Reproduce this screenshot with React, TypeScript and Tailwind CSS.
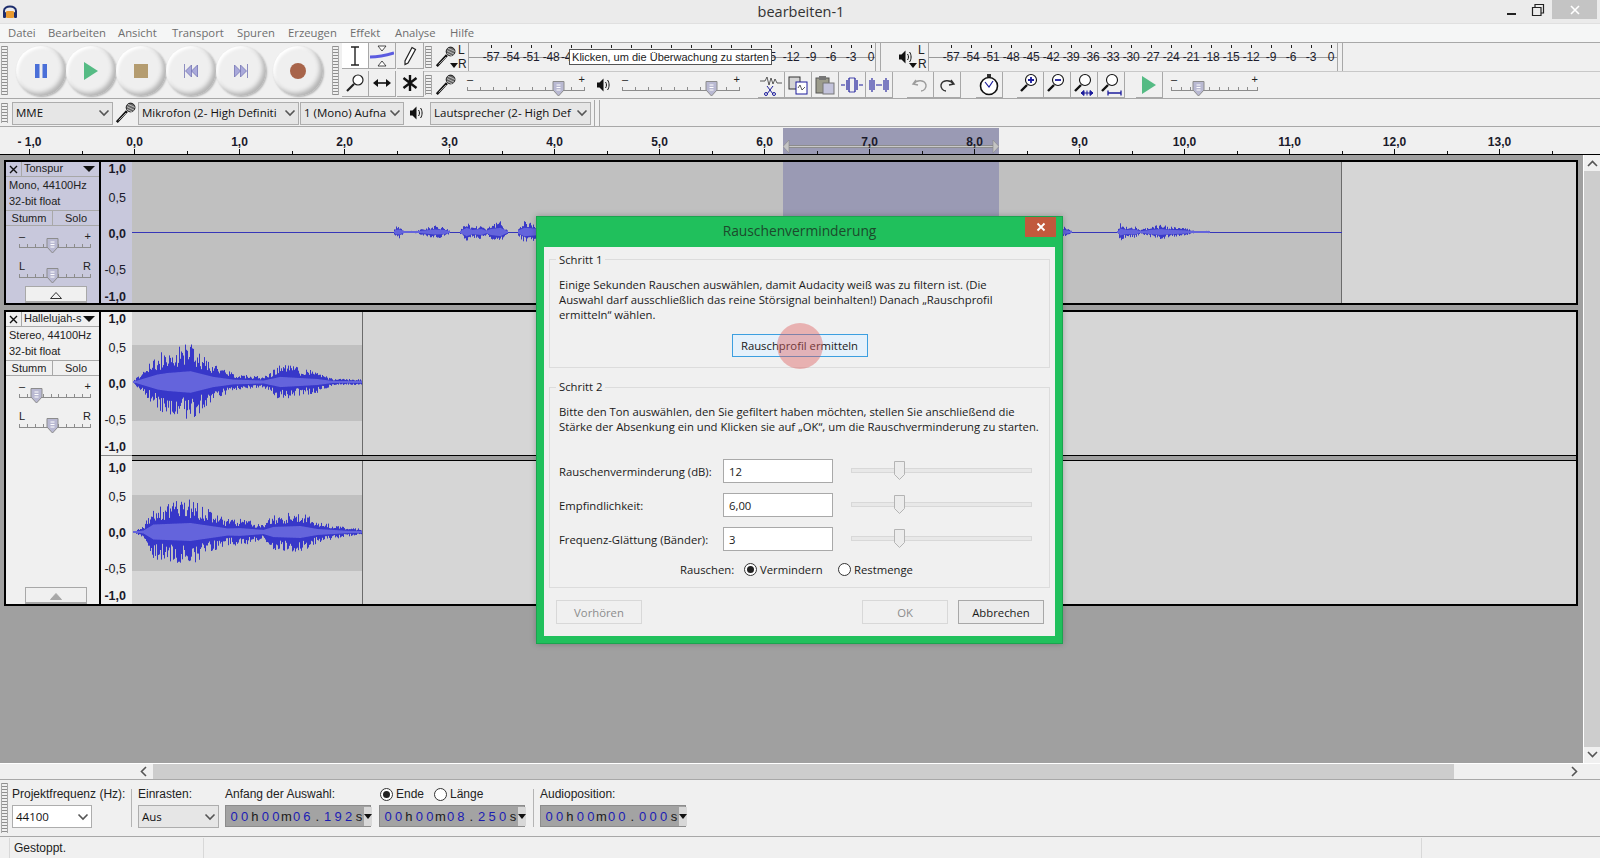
import React from 'react';

const sans = 'font-["Liberation_Sans",Arial,sans-serif]';
const ui = 'font-["Open_Sans","Noto_Sans",sans-serif]';

// deterministic noise so the wave form stays the same on every run
function makeRand(seed: number) {
  let s = seed;
  return () => {
    s = (s * 9301 + 49297) % 233280;
    return s / 233280;
  };
}

function envelope(knots: number[][], x: number) {
  for (let i = 0; i < knots.length - 1; i++) {
    const [x0, a0] = knots[i];
    const [x1, a1] = knots[i + 1];
    if (x >= x0 && x <= x1) return a0 + ((a1 - a0) * (x - x0)) / (x1 - x0);
  }
  return 0;
}

function wavePaths(knots: number[][], cy: number, seed: number, rmsRatio = 0.42) {
  const rand = makeRand(seed);
  let peak = '';
  let rms = '';
  const start = knots[0][0];
  const end = knots[knots.length - 1][0];
  for (let x = start; x < end; x += 1) {
    const a = envelope(knots, x);
    if (a <= 0) continue;
    const up = a * (0.45 + 0.65 * rand());
    const down = a * (0.45 + 0.65 * rand());
    peak += `M${x + 0.5} ${(cy - up).toFixed(1)}V${(cy + down).toFixed(1)}`;
    const r = Math.max(a * rmsRatio, 1);
    rms += `M${x + 0.5} ${(cy - r).toFixed(1)}V${(cy + r).toFixed(1)}`;
  }
  return { peak, rms };
}

const monoBlobs = [
  [[261, 0], [263, 5], [267, 6], [272, 1], [282, 1], [290, 3], [302, 6], [312, 5], [318, 1]],
  [[328, 2], [334, 10], [340, 5], [349, 7], [354, 3], [358, 7], [368, 10], [374, 3], [376, 1]],
  [[386, 4], [392, 10], [404, 8]],
  [[930, 6], [936, 3], [940, 1]],
  [[985, 1], [988, 8], [994, 5], [1002, 6], [1008, 2], [1018, 5], [1028, 7], [1038, 5], [1052, 4], [1062, 1], [1078, 1]],
];
const stereoLeft = [[0, 0], [8, 8], [25, 25], [35, 30], [58, 36], [81, 17], [101, 8], [131, 5], [148, 17], [185, 10], [201, 3], [230, 3]];
const stereoRight = [[0, 0], [11, 5], [21, 25], [58, 30], [95, 12], [108, 13], [131, 7], [141, 17], [168, 20], [185, 10], [215, 4], [230, 3]];

function MonoWave() {
  const parts = monoBlobs.map((k, i) => wavePaths(k, 70, 17 + i * 31));
  return (
    <svg width="1444" height="142" className="block bg-[#c0c0c0]">
      <rect x="651" y="0" width="216" height="142" fill="#9a9ab4" />
      <rect x="1210" y="0" width="234" height="142" fill="#d6d6d6" />
      <rect x="1209" y="0" width="1" height="142" fill="#6c6c6c" />
      <rect x="0" y="70" width="1210" height="1" fill="#3636b8" />
      {parts.map((p, i) => (
        <g key={i}>
          <path d={p.peak} stroke="#3a3ac8" strokeWidth="1" />
          <path d={p.rms} stroke="#6464dc" strokeWidth="1" />
        </g>
      ))}
    </svg>
  );
}

function StereoWave({ knots, seed, height, cy }: { knots: number[][]; seed: number; height: number; cy: number }) {
  const p = wavePaths(knots, cy, seed, 0.3);
  return (
    <svg width="1444" height={height} className="block bg-[#d6d6d6]">
      <rect x="0" y={cy - 37} width="230" height="76" fill="#c0c0c0" />
      <rect x="230" y="0" width="1" height={height} fill="#6c6c6c" />
      <path d={p.peak} stroke="#3737c9" strokeWidth="1" />
      <path d={p.rms} stroke="#6464dc" strokeWidth="1" />
    </svg>
  );
}

function Grip() {
  return (
    <div className="w-[9px] shrink-0 self-stretch py-[3px] px-[1px]">
      <div className="h-full border-x border-[#a8a8a8] bg-[repeating-linear-gradient(to_bottom,#8f8f8f_0,#8f8f8f_1px,#f0f0f0_1px,#f0f0f0_3px)]" />
    </div>
  );
}

function MicIcon({ size = 22 }: { size?: number }) {
  return (
    <svg width={size} height={size} viewBox="0 0 24 24">
      <path d="M13 10L2 22" stroke="#111" strokeWidth="2.8" />
      <path d="M12 12L4 20" stroke="#fff" strokeWidth="0.7" />
      <circle cx="17" cy="6" r="4.8" fill="#666" stroke="#111" strokeWidth="1" />
      <path d="M13 5L21 9M14 2.5L22 6M13 8L19 11" stroke="#ddd" strokeWidth="0.8" />
    </svg>
  );
}

function SpeakerIcon() {
  return (
    <svg width="14" height="16" viewBox="0 0 14 16">
      <path d="M0 5.5H2.5L6.5 1.5V14.5L2.5 10.5H0Z" fill="#111" />
      <path d="M8.5 5C9.8 6.5 9.8 9.5 8.5 11M10.5 3C12.6 5.5 12.6 10.5 10.5 13" fill="none" stroke="#111" strokeWidth="1" />
    </svg>
  );
}

function MeterDrop() {
  return (
    <svg width="8" height="5" viewBox="0 0 8 5" className="absolute bottom-[3px] right-0">
      <path d="M0 0H8L4 5Z" fill="#111" />
    </svg>
  );
}

function Magnifier({ mark }: { mark?: 'plus' | 'minus' | 'fit' | 'project' }) {
  return (
    <svg width="22" height="24" viewBox="0 0 22 24">
      <path d="M8 12L2 18" stroke="#111" strokeWidth="2.4" />
      <circle cx="12" cy="7" r="5.5" fill="#fff" stroke="#111" strokeWidth="1.1" />
      {mark === 'plus' && <path d="M9 7H15M12 4V10" stroke="#1c1c9c" strokeWidth="1.8" />}
      {mark === 'minus' && <path d="M9 7H15" stroke="#1c1c9c" strokeWidth="1.8" />}
      {mark === 'fit' && <path d="M8 20H20M11 17.5L8 20L11 22.5ZM17 17.5L20 20L17 22.5ZM14 17.5V22.5" fill="#1c1c9c" stroke="#1c1c9c" strokeWidth="1" />}
      {mark === 'project' && <path d="M8 20H21M8 17.5V22.5M21 17.5V22.5" stroke="#1c1c9c" strokeWidth="1.3" fill="none" />}
    </svg>
  );
}

function Thumb() {
  return (
    <svg width="13" height="17" viewBox="0 0 13 17" className="block">
      <path d="M1 1.5H12V10L6.5 16L1 10Z" fill="#b9b9d2" stroke="#8c8c8c" strokeWidth="1" />
      <path d="M4.5 5H8.5M4.5 7.5H8.5M4.5 10H8.5" stroke="#fff" strokeWidth="1" />
    </svg>
  );
}

function TickSlider({ width, thumbAt, left = '-', right = '+' }: { width: string; thumbAt: string; left?: string; right?: string }) {
  return (
    <div className={`relative h-[24px] shrink-0 ${width}`}>
      <div className={`flex justify-between pt-[1px] text-[11px] leading-[11px] text-[#222] ${sans}`}>
        <span>{left === '-' ? '–' : left}</span>
        <span>{right}</span>
      </div>
      <div className="mt-[1px] flex h-[5px] justify-between border-b border-[#8c8c8c] pt-[1px]">
        {Array.from({ length: 10 }).map((_, i) => (
          <span key={i} className="h-[3px] w-px bg-[#8c8c8c]" />
        ))}
      </div>
      <div className={`absolute top-[7px] ${thumbAt}`}>
        <Thumb />
      </div>
    </div>
  );
}

function TransportButton({ children, extra = '' }: { children: React.ReactNode; extra?: string }) {
  return (
    <div className={`flex h-[50px] w-[50px] shrink-0 items-center justify-center rounded-full bg-[#efefef] shadow-[inset_-3px_-3px_4px_#b4b4b4,inset_2px_2px_3px_#ffffff,1px_1px_2px_#b0b0b0] ${extra}`}>
      {children}
    </div>
  );
}

function ToolButton({ children, active, extra = '' }: { children: React.ReactNode; active?: boolean; extra?: string }) {
  return (
    <div className={`flex h-[26px] w-[27px] shrink-0 items-center justify-center border-r border-b border-[#a8a8a8] ${active ? 'bg-white' : 'bg-[#f0f0f0]'} ${extra}`}>
      {children}
    </div>
  );
}

const meterValues = ['-57', '-54', '-51', '-48', '-45', '-42', '-39', '-36', '-33', '-30', '-27', '-24', '-21', '-18', '-15', '-12', '-9', '-6', '-3', '0'];
// what stays readable of the first meter next to the tooltip
const firstMeterLabels: Record<string, string> = { '-42': '', '-39': '', '-36': '', '-33': '', '-30': '', '-27': '', '-24': '', '-21': '', '-18': '', '-45': '-4', '-15': '5' };

function Meter({ width, shown = {} }: { width: string; shown?: Record<string, string> }) {
  return (
    <div className={`relative flex h-full shrink-0 overflow-hidden border-l border-[#a8a8a8] pl-[12px] ${width}`}>
      <div className="absolute inset-x-0 top-[14px] h-px bg-[#9a9a9a]" />
      {meterValues.map(v => (
        <div key={v} className="relative flex w-[20px] shrink-0 flex-col items-center">
          <span className="mt-[2px] h-[3px] w-px bg-[#222]" />
          <span className={`mt-[2px] h-[14px] text-[12px] leading-[14px] tracking-[-0.2px] text-[#1c1c2c] ${v === '-45' && shown[v] ? 'self-start' : ''} ${v === '-15' && shown[v] ? 'self-end pr-[5px]' : ''} ${sans}`}>{v in shown ? shown[v] : v}</span>
        </div>
      ))}
    </div>
  );
}

function LR() {
  return (
    <div className={`flex w-[10px] shrink-0 flex-col text-[12px] leading-[14px] text-[#222] ${sans}`}>
      <span>L</span>
      <span>R</span>
    </div>
  );
}

function DeviceSelect({ label, width, white }: { label: string; width: string; white?: boolean }) {
  return (
    <div className={`flex h-[23px] shrink-0 items-center border border-[#adadad] pl-[3px] text-[11.5px] text-[#111] ${width} ${white ? 'bg-white' : 'bg-[#e6e6e6]'} ${ui}`}>
      <span className="min-w-0 flex-1 whitespace-nowrap">{label}</span>
      <svg width="16" height="10" viewBox="0 0 16 10" className="shrink-0">
        <path d="M3.5 2.5L8 7L12.5 2.5" fill="none" stroke="#555" strokeWidth="1.6" />
      </svg>
    </div>
  );
}

const rulerLabels = ['- 1,0', '0,0', '1,0', '2,0', '3,0', '4,0', '5,0', '6,0', '7,0', '8,0', '9,0', '10,0', '11,0', '12,0', '13,0'];

function TimeRuler() {
  return (
    <div className="relative h-[27px] shrink-0 overflow-hidden bg-[#f0f0f0]">
      <div className="absolute bottom-0 left-[783px] top-[1px] w-[216px] bg-[#9a9ab4]">
        <div className="absolute left-[6px] right-[6px] top-[17px] h-[3px] border-y border-[#8c8c8c] bg-[#c8c8c8]" />
        <svg width="216" height="14" className="absolute left-0 top-[12px]">
          <path d="M0 6.5L6 0V13Z M216 6.5L210 0V13Z" fill="#c4c4c4" stroke="#888" strokeWidth="0.6" />
        </svg>
      </div>
      <div className="relative ml-[-23px] flex pt-[8px]">
        {rulerLabels.map(l => (
          <div key={l} className={`w-[105px] shrink-0 text-center text-[12px] font-bold leading-[14px] text-[#1a1a2a] ${sans}`}>{l}</div>
        ))}
      </div>
      <div className="relative ml-[-23px] flex h-[5px] items-end pl-[52px]">
        {Array.from({ length: 32 }).map((_, i) => (
          <div key={i} className="flex w-[52.5px] shrink-0 items-end">
            <span className={`w-px bg-[#111] ${i % 2 === 0 ? 'h-[5px]' : 'h-[3px]'}`} />
          </div>
        ))}
      </div>
    </div>
  );
}

const vLabels = [
  { t: '1,0', c: 'mt-0 font-bold' },
  { t: '0,5', c: 'mt-[15px]' },
  { t: '0,0', c: 'mt-[22px] font-bold' },
  { t: '-0,5', c: 'mt-[22px]' },
  { t: '-1,0', c: 'mt-[13px] font-bold' },
];

function VerticalRuler({ bg }: { bg: string }) {
  return (
    <div className={`flex w-[31px] shrink-0 flex-col items-end pr-[6px] text-[12.5px] leading-[14px] text-[#1a1a2a] ${bg} ${sans}`}>
      {vLabels.map(v => (
        <span key={v.t} className={v.c}>{v.t}</span>
      ))}
    </div>
  );
}

function TrackPanel({ name, info, selected, gainThumb, children }: { name: string; info: string; selected?: boolean; gainThumb: string; children?: React.ReactNode }) {
  return (
    <div className={`flex w-[95px] shrink-0 flex-col border-r-2 border-black text-[11px] leading-[14px] text-[#222] ${selected ? 'bg-[#c8c8dc]' : 'bg-[#f0f0f0]'} ${sans}`}>
      <div className="flex h-[15px] border-b border-[#a8a8a8] leading-[13px]">
        <div className="flex w-[16px] items-center justify-center border-r border-[#a8a8a8]">
          <svg width="9" height="9" viewBox="0 0 9 9"><path d="M1 1L8 8M8 1L1 8" stroke="#111" strokeWidth="1.4" /></svg>
        </div>
        <span className="flex-1 overflow-hidden whitespace-nowrap pl-[2px]">{name}</span>
        <svg width="14" height="14" viewBox="0 0 14 14" className="mr-[3px] shrink-0"><path d="M1 4H13L7 10Z" fill="#111" /></svg>
      </div>
      <div className="pl-[3px] pt-[1px]">{info}</div>
      <div className="pl-[3px] pt-[2px] pb-[2px]">32-bit float</div>
      <div className="flex h-[16px] border-y border-[#a8a8a8] text-center">
        <span className="flex-1 border-r border-[#a8a8a8]">Stumm</span>
        <span className="flex-1">Solo</span>
      </div>
      <div className="pl-[13px] pt-[4px]">
        <TickSlider width="w-[72px]" thumbAt={gainThumb} />
      </div>
      <div className="pl-[13px] pt-[6px]">
        <TickSlider width="w-[72px]" thumbAt="left-[27px]" left="L" right="R" />
      </div>
      {children}
    </div>
  );
}

function CollapseButton({ muted }: { muted?: boolean }) {
  return (
    <div className="mt-auto ml-[19px] flex h-[17px] w-[62px] items-center justify-center border border-b-2 border-[#a8a8a8] bg-[#f0f0f0] pt-[3px]">
      <svg width="12" height="7" viewBox="0 0 12 7">
        <path d="M0.5 6.5L6 0.5L11.5 6.5Z" fill={muted ? '#a8a8a8' : 'none'} stroke={muted ? '#a8a8a8' : '#333'} />
      </svg>
    </div>
  );
}

function Clock({ text }: { text: string }) {
  return (
    <div className="flex h-[22px] w-[146px] shrink-0 items-center border border-[#8c8c8c] bg-[#a3a3a3] pl-[3px] pt-[1px] text-[13px]">
      {text.split('').map((c, i) => (
        <span key={i} className={`w-[10.4px] shrink-0 text-center ${/[0-9]/.test(c) ? 'text-[#1c1cb4]' : 'text-[#1a1a1a]'} ${sans}`}>{c}</span>
      ))}
      <div className="ml-auto flex h-full w-[8px] items-center justify-center bg-[#d8d8d8]">
        <svg width="8" height="5" viewBox="0 0 8 5"><path d="M0 0H8L4 5Z" fill="#111" /></svg>
      </div>
    </div>
  );
}

function Radio({ on }: { on?: boolean }) {
  return (
    <span className="flex h-[13px] w-[13px] shrink-0 items-center justify-center rounded-full border border-[#333] bg-white">
      {on && <span className="h-[7px] w-[7px] rounded-full bg-[#222]" />}
    </span>
  );
}

function DialogRow({ label, value }: { label: string; value: string }) {
  return (
    <div className="flex h-[24px] items-center">
      <span className="w-[173px] shrink-0 whitespace-nowrap pl-[9px]">{label}</span>
      <div className="flex h-[24px] w-[110px] shrink-0 items-center border border-[#a9a9a9] bg-white pl-[5px]">{value}</div>
      <div className="relative mb-[2px] ml-[18px] h-[5px] w-[181px] shrink-0 border border-[#d8d8d8] bg-[#e8e8e8]">
        <svg width="11" height="19" viewBox="0 0 11 19" className="absolute left-[42px] top-[-8px]">
          <path d="M0.5 0.5H10.5V13.5L5.5 18.5L0.5 13.5Z" fill="#ececec" stroke="#b4b4b4" />
        </svg>
      </div>
    </div>
  );
}

function Dialog() {
  return (
    <div className={`absolute left-[536px] top-[216px] flex h-[428px] w-[527px] flex-col border border-[#1aa44e] bg-[#20c05c] shadow-[0_0_6px_rgba(0,0,0,0.25)] ${ui}`}>
      <div className="relative flex h-[30px] shrink-0 items-center justify-center pb-[1px] text-[13.8px] text-[#1c4a2c]">
        Rauschenverminderung
        <div className="absolute right-[6px] top-0 flex h-[20px] w-[31px] items-center justify-center bg-[#c1593c]">
          <svg width="10" height="10" viewBox="0 0 10 10"><path d="M1.5 1.5L8.5 8.5M8.5 1.5L1.5 8.5" stroke="#fff" strokeWidth="1.8" /></svg>
        </div>
      </div>
      <div className="mx-[7px] mb-[7px] flex flex-1 flex-col bg-[#f0f0f0] px-[5px] pt-[12px] text-[11.3px] leading-[15px] text-[#1a1a1a]">
        <div className="relative h-[109px] border border-[#dcdcdc] px-[9px] pt-[17px]">
          <span className="absolute left-[6px] top-[-8px] bg-[#f0f0f0] px-[3px]">Schritt 1</span>
          <p className="whitespace-nowrap">Einige Sekunden Rauschen auswählen, damit Audacity weiß was zu filtern ist. (Die<br />Auswahl darf ausschließlich das reine Störsignal beinhalten!) Danach „Rauschprofil<br />ermitteln“ wählen.</p>
          <div className="relative mx-auto mt-[12px] flex h-[23px] w-[136px] items-center justify-center border border-[#3c9fe0] bg-[#e5f1fb]">
            Rauschprofil ermitteln
            <span className="absolute left-[44px] top-[-12px] h-[46px] w-[46px] rounded-full bg-[rgba(222,90,90,0.42)]" />
          </div>
        </div>
        <div className="relative mt-[19px] h-[201px] border border-[#dcdcdc] pt-[16px]">
          <span className="absolute left-[6px] top-[-9px] bg-[#f0f0f0] px-[3px]">Schritt 2</span>
          <p className="whitespace-nowrap pl-[9px]">Bitte den Ton auswählen, den Sie gefiltert haben möchten, stellen Sie anschließend die<br />Stärke der Absenkung ein und Klicken sie auf „OK“, um die Rauschverminderung zu starten.</p>
          <div className="mt-[25px] flex flex-col gap-[10px]">
            <DialogRow label="Rauschenverminderung (dB):" value="12" />
            <DialogRow label="Empfindlichkeit:" value="6,00" />
            <DialogRow label="Frequenz-Glättung (Bänder):" value="3" />
          </div>
          <div className="mt-[11px] flex items-center pl-[130px]">
            <span className="w-[64px]">Rauschen:</span>
            <Radio on />
            <span className="ml-[3px] w-[78px]">Vermindern</span>
            <Radio />
            <span className="ml-[3px]">Restmenge</span>
          </div>
        </div>
        <div className="mt-[12px] flex pl-[7px] pr-[6px]">
          <div className="flex h-[24px] w-[86px] items-center justify-center border border-[#d8d8d8] text-[#8c8c8c]">Vorhören</div>
          <div className="ml-auto flex h-[24px] w-[86px] items-center justify-center border border-[#d8d8d8] text-[#8c8c8c]">OK</div>
          <div className="ml-[10px] flex h-[24px] w-[86px] items-center justify-center border border-[#a8a8a8] bg-[#ececec]">Abbrechen</div>
        </div>
      </div>
    </div>
  );
}

const menuItems = [
  { t: 'Datei', w: 'w-[40px]' },
  { t: 'Bearbeiten', w: 'w-[70px]' },
  { t: 'Ansicht', w: 'w-[54px]' },
  { t: 'Transport', w: 'w-[65px]' },
  { t: 'Spuren', w: 'w-[51px]' },
  { t: 'Erzeugen', w: 'w-[62px]' },
  { t: 'Effekt', w: 'w-[45px]' },
  { t: 'Analyse', w: 'w-[55px]' },
  { t: 'Hilfe', w: 'w-[40px]' },
];

export default function App() {
  return (
    <div className={`relative flex h-[858px] w-[1600px] flex-col overflow-hidden bg-[#f0f0f0] ${sans}`}>
      {/* title bar */}
      <div className="flex h-[23px] shrink-0 items-center bg-[#ebebeb]">
        <div className="flex-1 pl-[2px]">
          <svg width="16" height="16" viewBox="0 0 16 16">
            <path d="M2 11V7C2 1 14 1 14 7V11" fill="none" stroke="#1c2c6c" strokeWidth="2" />
            <rect x="3.5" y="7" width="9" height="7" rx="2" fill="#e89a30" />
            <rect x="1" y="8" width="3" height="6" rx="1" fill="#1c2c6c" />
            <rect x="12" y="8" width="3" height="6" rx="1" fill="#1c2c6c" />
          </svg>
        </div>
        <span className={`text-[14.5px] text-[#333] ${ui}`}>bearbeiten-1</span>
        <div className="flex flex-1 items-start justify-end self-start">
          <svg width="14" height="14" viewBox="0 0 14 14" className="mr-[12px] mt-[5px]"><rect x="2" y="8" width="9" height="2" fill="#222" /></svg>
          <svg width="14" height="14" viewBox="0 0 14 14" className="mr-[7px] mt-[3px]"><path d="M1.5 4.5H10V12.5H1.5ZM4 4V1.5H12.5V10H10.5" fill="none" stroke="#222" strokeWidth="1.2" /></svg>
          <div className="mr-[3px] flex h-[19px] w-[45px] items-center justify-center bg-[#c4c4c4]">
            <svg width="10" height="10" viewBox="0 0 10 10"><path d="M1 1L9 9M9 1L1 9" stroke="#fff" strokeWidth="1.6" /></svg>
          </div>
        </div>
      </div>

      {/* menu */}
      <div className={`flex h-[19px] shrink-0 items-center border-t border-[#e0e0e0] bg-[#f5f6f6] pl-[8px] text-[11.3px] text-[#6e6e6e] ${ui}`}>
        {menuItems.map(m => (
          <span key={m.t} className={m.w}>{m.t}</span>
        ))}
      </div>

      {/* transport, tools, meters */}
      <div className="flex h-[57px] shrink-0 border-y border-[#a8a8a8] bg-[#f0f0f0]">
        <Grip />
        <div className="flex w-[322px] shrink-0 items-center pl-[7px]">
          <TransportButton>
            <svg width="14" height="14" viewBox="0 0 14 14"><path d="M1 0H5.5V14H1ZM8.5 0H13V14H8.5Z" fill="#4a6fd8" /></svg>
          </TransportButton>
          <TransportButton>
            <svg width="16" height="18" viewBox="0 0 16 18"><path d="M1 0L15 9L1 18Z" fill="#55bb84" /></svg>
          </TransportButton>
          <TransportButton>
            <svg width="14" height="14" viewBox="0 0 14 14"><rect width="14" height="14" fill="#b49c70" /></svg>
          </TransportButton>
          <TransportButton>
            <svg width="14" height="14" viewBox="0 0 14 14"><path d="M0.5 0V14M7.5 1L1.5 7L7.5 13ZM13.5 1L7.5 7L13.5 13Z" fill="#a9a9da" stroke="#7474b4" strokeWidth="0.8" /></svg>
          </TransportButton>
          <TransportButton>
            <svg width="14" height="14" viewBox="0 0 14 14"><path d="M13.5 0V14M6.5 1L12.5 7L6.5 13ZM0.5 1L6.5 7L0.5 13Z" fill="#a9a9da" stroke="#7474b4" strokeWidth="0.8" /></svg>
          </TransportButton>
          <TransportButton extra="ml-[7px]">
            <svg width="16" height="16" viewBox="0 0 16 16"><circle cx="8" cy="8" r="8" fill="#a8644a" /></svg>
          </TransportButton>
        </div>
        <Grip />
        <div className="grid w-[84px] shrink-0 grid-cols-3 pl-[2px]">
          <ToolButton active>
            <svg width="12" height="20" viewBox="0 0 12 20"><path d="M2 1H10M6 1V19M2 19H10" stroke="#222" strokeWidth="1.4" fill="none" /></svg>
          </ToolButton>
          <ToolButton>
            <svg width="24" height="24" viewBox="0 0 24 24"><path d="M8 2H16L12 7ZM8 22H16L12 17Z" fill="#fff" stroke="#222" strokeWidth="0.8" /><path d="M0 13C8 13 14 12 24 9" stroke="#5c5ce0" strokeWidth="3" fill="none" /></svg>
          </ToolButton>
          <ToolButton>
            <svg width="14" height="20" viewBox="0 0 14 20"><path d="M9 1.5L12.5 3.5L5 17L2 18.5L2 15Z" fill="#fff" stroke="#222" strokeWidth="1.2" /></svg>
          </ToolButton>
          <ToolButton>
            <svg width="20" height="20" viewBox="0 0 20 20"><circle cx="13" cy="7" r="5" fill="#fff" stroke="#222" strokeWidth="1.2" /><path d="M9 11L2 18" stroke="#222" strokeWidth="2.2" /></svg>
          </ToolButton>
          <ToolButton>
            <svg width="18" height="10" viewBox="0 0 18 10"><path d="M3 5H15" stroke="#111" strokeWidth="1.6" /><path d="M0 5L5 1V9ZM18 5L13 1V9Z" fill="#111" /></svg>
          </ToolButton>
          <ToolButton>
            <svg width="16" height="18" viewBox="0 0 16 18"><path d="M8 1V17M1.5 4L14.5 14M14.5 4L1.5 14" stroke="#111" strokeWidth="2.4" /></svg>
          </ToolButton>
        </div>
        <div className="relative flex min-w-0 flex-1 flex-col">
          <div className="flex h-[28px] shrink-0">
            <Grip />
            <div className="relative flex w-[25px] shrink-0 items-center justify-center"><MicIcon /><MeterDrop /></div>
            <LR />
            <Meter width="w-[407px]" shown={firstMeterLabels} />
            <div className="h-full w-[6px] shrink-0 border-x border-[#a8a8a8]" />
            <div className="ml-[4px]"><Grip /></div>
            <div className="relative flex w-[23px] shrink-0 items-center justify-center"><SpeakerIcon /><MeterDrop /></div>
            <div className="ml-[1px]"><LR /></div>
            <Meter width="w-[409px]" />
            <div className="h-full w-[6px] shrink-0 border-x border-[#a8a8a8]" />
          </div>
          {/* tooltip over the first meter */}
          <div className="absolute left-[145px] top-[6px] flex h-[16px] w-[203px] items-center justify-center whitespace-nowrap border border-[#555] bg-white text-[11px] text-[#222]">
            Klicken, um die Überwachung zu starten
          </div>
          <div className="flex min-h-0 flex-1 items-center border-t border-[#c8c8c8]">
            <Grip />
            <div className="flex w-[25px] shrink-0 items-center justify-center"><MicIcon /></div>
            <div className="ml-[9px]"><TickSlider width="w-[118px]" thumbAt="left-[85px]" /></div>
            <div className="ml-[5px] flex w-[27px] shrink-0 justify-center"><SpeakerIcon /></div>
            <div className="ml-[5px]"><TickSlider width="w-[118px]" thumbAt="left-[83px]" /></div>
            <div className="ml-[9px]"><Grip /></div>
            <ToolButton>
              <svg width="22" height="22" viewBox="0 0 22 22"><path d="M0 7H5L7 3L9 11L11 4L13 10L15 5L17 9H22" fill="none" stroke="#333" strokeWidth="0.8" /><path d="M7 12L13 20M13 12L7 20" stroke="#1c1c9c" strokeWidth="1" /><circle cx="6" cy="20" r="1.5" fill="none" stroke="#1c1c9c" /><circle cx="14" cy="20" r="1.5" fill="none" stroke="#1c1c9c" /></svg>
            </ToolButton>
            <ToolButton>
              <svg width="22" height="22" viewBox="0 0 22 22"><rect x="2" y="3" width="11" height="12" fill="#d4d4d4" stroke="#333" /><rect x="9" y="8" width="11" height="12" fill="#fff" stroke="#1c1c9c" /><path d="M11 14L13 11L15 16L18 13" fill="none" stroke="#333" strokeWidth="0.8" /></svg>
            </ToolButton>
            <ToolButton>
              <svg width="22" height="22" viewBox="0 0 22 22"><rect x="2" y="4" width="13" height="15" fill="#9c9c8c" stroke="#555" /><rect x="5" y="2" width="7" height="4" fill="#777" /><rect x="9" y="9" width="11" height="11" fill="#c4c4dc" stroke="#777" /></svg>
            </ToolButton>
            <ToolButton>
              <svg width="22" height="20" viewBox="0 0 22 20"><path d="M0 10H4M18 10H22" stroke="#1c1c9c" /><path d="M6 5V15M8 3V17M14 3V17M16 5V15" stroke="#1c1c9c" strokeWidth="1.2" /><path d="M8 3H14M8 17H14" stroke="#1c1c9c" strokeWidth="0.8" /></svg>
            </ToolButton>
            <ToolButton>
              <svg width="22" height="20" viewBox="0 0 22 20"><path d="M8 10H14" stroke="#1c1c9c" /><path d="M2 5V15M4 3V17M6 5V15M16 5V15M18 3V17M20 5V15" stroke="#1c1c9c" strokeWidth="1.1" /></svg>
            </ToolButton>
            <div className="ml-[14px]"><ToolButton>
              <svg width="18" height="16" viewBox="0 0 18 16"><path d="M5 3L2 7L7 8M2.5 7C6 2 14 3 15 8C15.5 11 13 14 10 14" fill="none" stroke="#9c9c9c" strokeWidth="1.4" /></svg>
            </ToolButton></div>
            <ToolButton>
              <svg width="18" height="16" viewBox="0 0 18 16"><path d="M13 3L16 7L11 8M15.5 7C12 2 4 3 3 8C2.5 11 5 14 8 14" fill="none" stroke="#333" strokeWidth="1.4" /></svg>
            </ToolButton>
            <div className="ml-[15px]"><ToolButton>
              <svg width="20" height="24" viewBox="0 0 20 24"><rect x="8" y="1" width="4" height="3" fill="#333" /><circle cx="10" cy="13" r="8.5" fill="#fff" stroke="#111" strokeWidth="1.6" /><path d="M6 9L10 14L14 8" fill="none" stroke="#1c1c9c" strokeWidth="1.2" /></svg>
            </ToolButton></div>
            <div className="ml-[14px]"><ToolButton><Magnifier mark="plus" /></ToolButton></div>
            <ToolButton><Magnifier mark="minus" /></ToolButton>
            <ToolButton><Magnifier mark="fit" /></ToolButton>
            <ToolButton><Magnifier mark="project" /></ToolButton>
            <div className="ml-[2px]"><Grip /></div>
            <ToolButton>
              <svg width="16" height="20" viewBox="0 0 16 20"><path d="M1 1L15 10L1 19Z" fill="#55bb84" /></svg>
            </ToolButton>
            <div className="ml-[8px]"><TickSlider width="w-[87px]" thumbAt="left-[21px]" /></div>
          </div>
        </div>
      </div>

      {/* device toolbar */}
      <div className="flex h-[28px] shrink-0 items-center border-b border-[#a8a8a8] bg-[#f0f0f0] pt-[1px]">
        <Grip />
        <div className="ml-[3px]"><DeviceSelect label="MME" width="w-[101px]" /></div>
        <div className="flex w-[25px] shrink-0 justify-center"><MicIcon /></div>
        <DeviceSelect label="Mikrofon (2- High Definiti" width="w-[161px]" />
        <div className="ml-[1px]"><DeviceSelect label="1 (Mono) Aufna" width="w-[104px]" /></div>
        <div className="flex w-[26px] shrink-0 justify-center"><SpeakerIcon /></div>
        <DeviceSelect label="Lautsprecher (2- High Def" width="w-[161px]" />
        <div className="ml-[3px] h-full w-[6px] shrink-0 border-x border-[#a8a8a8]" />
      </div>

      <TimeRuler />
      <div className="h-[1px] shrink-0 bg-black" />

      {/* tracks */}
      <div className="flex min-h-0 flex-1 bg-[#a0a0a0]">
        <div className="min-w-0 flex-1 pl-[4px] pt-[5px]">
          <div className="flex h-[145px] w-[1574px] overflow-hidden border-2 border-black">
            <TrackPanel name="Tonspur" info="Mono, 44100Hz" selected gainThumb="left-[27px]">
              <CollapseButton />
            </TrackPanel>
            <VerticalRuler bg="bg-[#c8c8dc]" />
            <MonoWave />
          </div>
          <div className="mt-[5px] flex h-[296px] w-[1574px] overflow-hidden border-2 border-black">
            <TrackPanel name="Hallelujah-s" info="Stereo, 44100Hz" gainThumb="left-[11px]">
              <CollapseButton muted />
            </TrackPanel>
            <div className="flex min-w-0 flex-1 flex-col">
              <div className="flex h-[143px] shrink-0 overflow-hidden">
                <VerticalRuler bg="bg-[#f0f0f0]" />
                <StereoWave knots={stereoLeft} seed={311} height={143} cy={70} />
              </div>
              <div className="flex h-[6px] shrink-0">
                <div className="w-[31px] shrink-0 border-t border-[#888] bg-[#f0f0f0]" />
                <div className="flex-1 border-y border-black bg-[#a0a0a0]" />
              </div>
              <div className="flex h-[143px] shrink-0 overflow-hidden">
                <VerticalRuler bg="bg-[#f0f0f0]" />
                <StereoWave knots={stereoRight} seed={733} height={143} cy={71} />
              </div>
            </div>
          </div>
        </div>
        <div className="flex w-[17px] shrink-0 flex-col items-center border-l border-white bg-[#f0f0f0]">
          <svg width="11" height="7" viewBox="0 0 11 7" className="mt-[5px]"><path d="M1 6L5.5 1.5L10 6" fill="none" stroke="#555" strokeWidth="1.6" /></svg>
          <div className="mt-[4px] w-full flex-1 bg-[#cdcdcd]" />
          <svg width="11" height="7" viewBox="0 0 11 7" className="mb-[5px] mt-[4px]"><path d="M1 1L5.5 5.5L10 1" fill="none" stroke="#555" strokeWidth="1.6" /></svg>
        </div>
      </div>

      {/* horizontal scroll */}
      <div className="flex h-[16px] shrink-0 items-center border-t border-white bg-[#f0f0f0] pl-[140px]">
        <svg width="7" height="11" viewBox="0 0 7 11"><path d="M6 1L1.5 5.5L6 10" fill="none" stroke="#555" strokeWidth="1.6" /></svg>
        <div className="ml-[6px] h-full w-[1301px] bg-[#cdcdcd]" />
        <svg width="7" height="11" viewBox="0 0 7 11" className="ml-[117px]"><path d="M1 1L5.5 5.5L1 10" fill="none" stroke="#555" strokeWidth="1.6" /></svg>
      </div>

      {/* selection toolbar */}
      <div className="flex h-[58px] shrink-0 border-y border-[#a8a8a8] bg-[#f0f0f0] text-[12px] text-[#222]">
        <Grip />
        <div className="ml-[3px] w-[119px] shrink-0 pt-[6px]">
          <div className="leading-[16px]">Projektfrequenz (Hz):</div>
          <div className="mt-[3px]"><DeviceSelect label=" 44100" width="w-[80px]" white /></div>
        </div>
        <div className="my-[9px] w-px shrink-0 bg-[#b4b4b4]" />
        <div className="ml-[6px] w-[87px] shrink-0 pt-[6px]">
          <div className="leading-[16px]">Einrasten:</div>
          <div className="mt-[3px]"><DeviceSelect label="Aus" width="w-[81px]" /></div>
        </div>
        <div className="w-[154px] shrink-0 pt-[6px]">
          <div className="leading-[16px]">Anfang der Auswahl:</div>
          <div className="mt-[3px]"><Clock text="00h00m06.192s" /></div>
        </div>
        <div className="w-[154px] shrink-0 pt-[6px]">
          <div className="flex h-[16px] items-center gap-[3px] pl-[1px]">
            <Radio on />
            <span className="w-[35px]">Ende</span>
            <Radio />
            <span>Länge</span>
          </div>
          <div className="mt-[3px]"><Clock text="00h00m08.250s" /></div>
        </div>
        <div className="my-[9px] w-px shrink-0 bg-[#b4b4b4]" />
        <div className="ml-[6px] shrink-0 pt-[6px]">
          <div className="leading-[16px]">Audioposition:</div>
          <div className="mt-[3px]"><Clock text="00h00m00.000s" /></div>
        </div>
      </div>

      {/* status bar */}
      <div className="flex h-[21px] shrink-0 items-center bg-[#f0f0f0] pt-[1px] text-[12px] text-[#222]">
        <div className="ml-[9px] flex h-full w-[195px] items-center border-x border-[#d8d8d8] pl-[4px]">Gestoppt.</div>
        <div className="ml-auto h-full w-[179px] border-l border-[#d8d8d8]" />
      </div>

      <Dialog />
    </div>
  );
}
